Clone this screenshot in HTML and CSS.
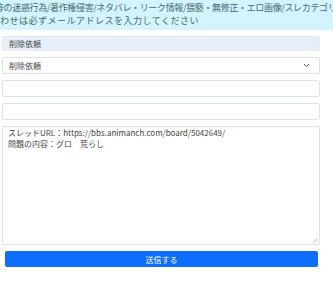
FILE: index.html
```html
<!DOCTYPE html>
<html lang="ja">
<head>
<meta charset="utf-8">
<link rel="stylesheet" href="styles.css">
</head>
<body>
<div class="alert">
  <div class="line line1">荒らし等の迷惑行為/著作権侵害/ネタバレ・リーク情報/猥褻・無修正・エロ画像/スレカテゴリ違反等の削除依頼はこちらからお願いします</div>
  <div class="line line2">お問い合わせは必ずメールアドレスを入力してください</div>
</div>
<form class="form">
  <div class="field static">削除依頼</div>
  <div class="field select">
    <span>削除依頼</span>
    <svg class="chev" width="7" height="5" viewBox="0 0 7 5"><path d="M1 1 L3.5 3.5 L6 1" fill="none" stroke="#555" stroke-width="1"/></svg>
  </div>
  <div class="field input"></div>
  <div class="field input"></div>
  <div class="field textarea">スレッドURL：https://bbs.animanch.com/board/5042649/<br>問題の内容：グロ　荒らし
    <svg class="grip" width="6" height="6" viewBox="0 0 6 6"><path d="M5.5 1 L1 5.5 M5.5 3.5 L3.5 5.5" stroke="#aaa" stroke-width="0.8"/></svg>
  </div>
  <button type="button" class="btn">送信する</button>
</form>
</body>
</html>
```
FILE: styles.css
```css
html, body {
  margin: 0;
  padding: 0;
  background: #fff;
  font-family: "Noto Sans CJK JP", "Noto Sans", sans-serif;
}
.alert {
  background: #d3f4fc;
  height: 30px;
  padding-top: 1px;
  box-sizing: border-box;
  overflow: hidden;
  color: #456a75;
  font-size: 9px;
  line-height: 13px;
}
.line {
  white-space: nowrap;
}
.line1 {
  letter-spacing: -0.35px;
  text-indent: -31px;
}
.line2 {
  letter-spacing: 0.5px;
  text-indent: -38px;
}
.form {
  display: flex;
  flex-direction: column;
  gap: 6px;
  padding: 6px 13px 0 2px;
  margin: 0;
}
.field {
  box-sizing: border-box;
  border: 1px solid #dee2e6;
  border-radius: 2px;
  background: #fff;
  font-size: 8px;
  color: #444;
  padding: 0 6px;
  display: flex;
  align-items: center;
}
.static {
  height: 15px;
  background: #e8eefa;
  border-color: #e4e9f2;
}
.select {
  height: 17px;
  justify-content: space-between;
}
.chev {
  margin-right: 3px;
}
.input {
  height: 17px;
}
.textarea {
  height: 119px;
  display: block;
  position: relative;
  padding: 1px 5px;
  font-size: 8px;
  line-height: 10.5px;
  color: #444;
}
.grip {
  position: absolute;
  right: 1px;
  bottom: 1px;
}
.btn {
  margin: 0 2px 0 3px;
  height: 16px;
  border: 0;
  border-radius: 2px;
  background: #0d6efd;
  color: #fff;
  font-family: "Noto Sans CJK JP", sans-serif;
  font-size: 8px;
  padding: 0;
}
```
